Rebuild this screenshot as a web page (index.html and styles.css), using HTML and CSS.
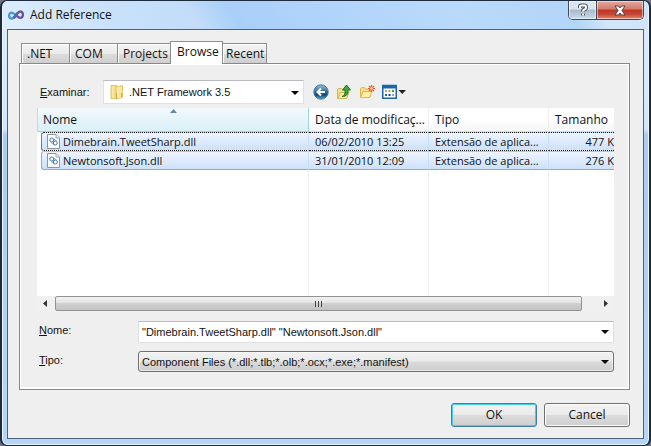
FILE: index.html
```html
<!DOCTYPE html>
<html lang="pt">
<head>
<meta charset="utf-8">
<title>Add Reference</title>
<link rel="stylesheet" href="styles.css">
</head>
<body>
<div class="window" role="dialog" aria-labelledby="title">
  <header class="titlebar">
    <svg class="app-icon" viewBox="0 0 16 10" fill="none" stroke-width="2.4" aria-hidden="true">
      <path d="M8 5C6 8 4.8 8.5 3.8 8.5a2.7 2.9 0 0 1 0-5.8C5.500 2.700 6.500 4 8 5.500" stroke="#4a9acb"/>
      <path d="M6 7.500C8.500 6 9.500 1.500 12.200 1.500a2.800 3.200 0 0 1 0 6.400C10.500 7.900 9.500 6.500 8 5" stroke="#6b4f9e"/>
      <path d="M5.500 8C7.500 7 8 5 9.500 3" stroke="#5068b4"/>
    </svg>
    <h1 id="title">Add Reference</h1>
    <div class="caption-buttons">
      <button class="caption help" type="button" aria-label="Help">
        <svg viewBox="0 0 12 14" width="12" height="14" fill="none" aria-hidden="true">
          <path d="M3 5V3.500Q3 2.500 4.500 2.500H7.500Q9 2.500 9 4V5Q9 6 7.500 6.500 6 7 6 8.500M6 10.500v2" stroke="#4b5666" stroke-width="4"/>
          <path d="M3 5V3.500Q3 2.500 4.500 2.500H7.500Q9 2.500 9 4V5Q9 6 7.500 6.500 6 7 6 8.500M6 10.500v2" stroke="#fff" stroke-width="2"/>
        </svg>
      </button>
      <button class="caption close" type="button" aria-label="Close">
        <svg viewBox="0 0 12 11" width="12" height="11" aria-hidden="true">
          <path d="M1 1h3.500L6 3l1.500-2H11L8 5.500 11 10H7.500L6 8l-1.500 2H1l3-4.500z" fill="#fff" stroke="#5c3b40"/>
        </svg>
      </button>
    </div>
  </header>

  <main class="client">
    <div class="tabs" role="tablist">
      <button class="tab" type="button" role="tab">.NET</button>
      <button class="tab" type="button" role="tab">COM</button>
      <button class="tab wide" type="button" role="tab">Projects</button>
      <button class="tab active" type="button" role="tab" aria-selected="true">Browse</button>
      <button class="tab last" type="button" role="tab">Recent</button>
    </div>

    <section class="panel">
      <div class="lookin">
        <label for="folder"><u>E</u>xaminar:</label>
        <div class="combo folder-combo">
          <svg class="folder" viewBox="0 0 14 16" width="14" height="16" aria-hidden="true">
            <path d="M1 1.500h6v13H1z" fill="#f3dc83" stroke="#dfc368"/>
            <path d="M6 3l6.500-1.500v12L6 15z" fill="#f8e69b" stroke="#e3c76c"/>
            <path d="M3 2v12M8 4v9" stroke="#fff5c6"/>
            <path d="M6.500 9v6M11.500 9v4" stroke="#d0ae50"/>
          </svg>
          <select id="folder"><option>.NET Framework 3.5</option></select>
        </div>
        <div class="tools">
          <button class="tool" type="button" aria-label="Back">
            <svg viewBox="0 0 16 16" width="16" height="16" aria-hidden="true">
              <defs><linearGradient id="orb" x2="0" y2="1"><stop stop-color="#9cc0da"/><stop offset=".45" stop-color="#2f70a3"/><stop offset=".7" stop-color="#124878"/><stop offset="1" stop-color="#42b7dc"/></linearGradient></defs>
              <circle cx="8" cy="8" r="7.200" fill="url(#orb)" stroke="#4d7898"/>
              <path d="M12 8H5M8 4.500L4.500 8 8 11.500" fill="none" stroke="#fff" stroke-width="2"/>
            </svg>
          </button>
          <button class="tool" type="button" aria-label="Up one level">
            <svg viewBox="0 0 16 16" width="16" height="16" aria-hidden="true">
              <path d="M1.500 14.500v-9l1-1h3l1 1h5v7l-2 2z" fill="#f6df7c" stroke="#d0b35a"/>
              <path d="M2 14.500l2.500-6h8.500l-2.500 6z" fill="#fff0a2" stroke="#d0b35a"/>
              <path d="M6 12.500c3-1 3.300-3.500 3-6.500H6.500l4-5 4 5H12c.5 4-1.500 6.500-6 6.500z" fill="#3caa36" stroke="#16741d"/>
            </svg>
          </button>
          <button class="tool" type="button" aria-label="New folder">
            <svg viewBox="0 0 16 16" width="16" height="16" aria-hidden="true">
              <path d="M1.500 13.500v-9l1-1h3l1 1.500H11v8z" fill="#f6df7c" stroke="#dcb85d"/>
              <path d="M1.500 13.500l2.500-6h9l-2.500 6z" fill="#fff0a2" stroke="#dcb85d"/>
              <path d="M12.500 1v7M9 4.500h7M10 2l5 5M15 2l-5 5" stroke="#ee5a32" stroke-width="1.200"/>
              <circle cx="12.500" cy="4.500" r="1.300" fill="#ffe18c"/>
            </svg>
          </button>
          <button class="tool view" type="button" aria-label="View">
            <svg viewBox="0 0 24 16" width="24" height="16" aria-hidden="true">
              <path d="M.75 1.500h13.500v12.700H.75z" fill="#fff" stroke="#1d63ad" stroke-width="1.500"/>
              <path d="M0 1h15v3.500H0z" fill="#1d63ad"/>
              <path d="M3 6h2v2H3zM10 10h2v2h-2z" fill="#8fa9c6"/>
              <path d="M6.500 6h2v2h-2z" fill="#c89c42"/><path d="M10 6h2v2h-2z" fill="#3b9b48"/>
              <path d="M3 10h2v2H3z" fill="#2466b0"/><path d="M6.500 10h2v2h-2z" fill="#203c98"/>
              <path d="M16.500 6H24l-3.750 4z" fill="#222"/>
            </svg>
          </button>
        </div>
      </div>

      <div class="list">
        <table>
          <colgroup><col class="c-name"><col class="c-mid"><col class="c-mid"><col></colgroup>
          <thead>
            <tr><th class="sorted" aria-sort="ascending">Nome</th><th>Data de modificaç...</th><th>Tipo</th><th>Tamanho</th></tr>
          </thead>
          <tbody>
            <tr class="selected focused">
              <td><span class="file"><svg viewBox="0 0 13 15" width="13" height="15" aria-hidden="true"><path d="M.5.500h8.500l3.500 3.500v10.500H.5z" fill="#fff" stroke="#8d9398"/><path d="M9 .5V4h3.500" fill="#eee" stroke="#a0a5aa"/><g fill="none" stroke="#3c76ab"><circle cx="4.800" cy="6" r="2"/><circle cx="8.300" cy="9" r="2"/></g><path d="M4 8.500l3 2.500M7 5l3 2.500" stroke="#7a9fc1"/></svg>Dimebrain.TweetSharp.dll</span></td>
              <td>06/02/2010 13:25</td><td>Extensão de aplica...</td><td class="size">477 K</td>
            </tr>
            <tr class="selected">
              <td><span class="file"><svg viewBox="0 0 13 15" width="13" height="15" aria-hidden="true"><path d="M.5.500h8.500l3.500 3.500v10.500H.5z" fill="#fff" stroke="#8d9398"/><path d="M9 .5V4h3.500" fill="#eee" stroke="#a0a5aa"/><g fill="none" stroke="#3c76ab"><circle cx="4.800" cy="6" r="2"/><circle cx="8.300" cy="9" r="2"/></g><path d="M4 8.500l3 2.500M7 5l3 2.500" stroke="#7a9fc1"/></svg>Newtonsoft.Json.dll</span></td>
              <td>31/01/2010 12:09</td><td>Extensão de aplica...</td><td class="size">276 K</td>
            </tr>
            <tr class="blank" aria-hidden="true"><td></td><td></td><td></td><td></td></tr>
          </tbody>
        </table>
        <div class="scrollbar" aria-hidden="true">
          <span class="arrow left"></span>
          <div class="track"><div class="thumb"><i></i><i></i><i></i></div></div>
          <span class="arrow right"></span>
        </div>
      </div>

      <div class="fields">
        <label for="name"><u>N</u>ome:</label>
        <div class="combo"><input id="name" type="text" value='"Dimebrain.TweetSharp.dll" "Newtonsoft.Json.dll"'></div>
        <label for="type"><u>T</u>ipo:</label>
        <div class="combo raised"><select id="type"><option>Component Files (*.dll;*.tlb;*.olb;*.ocx;*.exe;*.manifest)</option></select></div>
      </div>
    </section>

    <footer class="actions">
      <button class="button default" type="button">OK</button>
      <button class="button" type="button">Cancel</button>
    </footer>
  </main>
</div>
</body>
</html>
```
FILE: styles.css
```css
* { box-sizing: border-box; }

body {
  margin: 0;
  background: #6d7480;
  color: #111;
  font: 12px/16px "Open Sans", "Noto Sans", sans-serif;
}

button, input, select { font: inherit; color: inherit; margin: 0; }

.window {
  display: flex;
  flex-direction: column;
  min-height: 100vh;
  padding: 0 5px 6px;
  border: 2px solid #1e2b3c;
  border-top-width: 1px;
  border-bottom-width: 1px;
  border-radius: 7px;
  background: linear-gradient(#dcecfd 0, #d2e6fc 128px, #a9cdf3 134px, #b4d6f8 100%);
  box-shadow: inset 0 0 0 1px #eaf5ff;
}

.titlebar {
  display: flex;
  align-items: center;
  height: 28px;
  margin: 0 -4px;
  padding-left: 5px;
  border-radius: 5px 5px 0 0;
  background: linear-gradient(58deg, #dfeefd 0, #c9e1fb 17%, #c2dcf9 30%, #a9cff8 36%, #aed2fa 45%, #b9dafb 70%, #b3d5f7 87%, #d3e6f8 92%, #cfe4fa 100%);
}

.app-icon { width: 16px; height: 10px; }

h1 { flex: 1; margin: 0 0 0 6px; font: inherit; }

.caption-buttons {
  display: flex;
  align-self: flex-start;
  margin-right: 4px;
  border: 1px solid #3d4b5f;
  border-top: 0;
  border-radius: 0 0 5px 5px;
  overflow: hidden;
}

.caption {
  display: grid;
  place-items: center;
  height: 18px;
  padding: 0;
  border: 0;
  box-shadow: inset 0 0 0 1px #ffffff80;
}

.help { width: 27px; background: linear-gradient(#dce5ef 0 45%, #a9b9ca 50%, #c9dced); }
.close { width: 47px; border-left: 1px solid #3d4b5f; background: linear-gradient(#e5aaa0, #d57967 45%, #ba3525 50%, #c74835 75%, #e38b6f); }

.client {
  flex: 1;
  padding: 10px 13px 11px 11px;
  border: 1px solid #4d6178;
  background: #efefef;
}

.tabs { display: flex; align-items: flex-end; padding-left: 2px; height: 23px; }

.tab {
  width: 48px;
  height: 20px;
  padding: 0 5px;
  border: 1px solid #8b8e93;
  border-width: 1px 0 0 1px;
  background: linear-gradient(#f3f3f3, #ebebeb 50%, #dcdcdc 52%, #cfcfcf);
  box-shadow: inset 1px 1px #fff;
  text-align: left;
  white-space: nowrap;
}

.tab.wide { width: 53px; }
.tab.active { position: relative; width: 53px; height: 23px; margin-bottom: -1px; padding: 0 6px 3px; border-right-width: 1px; background: #fff; }
.tab.last { width: 44px; padding: 0 3px; border-left-width: 0; border-right-width: 1px; }

.panel {
  padding: 16px 15px 17px 17px;
  border: 1px solid #85888c;
  box-shadow: inset 1px 1px #fff, inset -1px -2px #fff;
}

label, .fields, .combo { font-family: "Liberation Sans", Arial, sans-serif; font-size: 11px; }

.lookin { display: flex; align-items: center; height: 24px; margin-bottom: 4px; padding-left: 3px; }
.lookin label { width: 63px; }

.combo { position: relative; display: flex; align-items: center; height: 22px; border: 1px solid #dfe0e2; border-top-color: #b9bbc0; background: #fff; }
.combo::after {
  content: "";
  position: absolute;
  right: 4px;
  top: 8px;
  width: 8px;
  height: 4px;
  background: #000;
  clip-path: polygon(0 0, 100% 0, 50% 100%);
  pointer-events: none;
}

.combo input, .combo select { flex: 1; min-width: 0; height: 20px; padding: 0 18px 0 3px; border: 0; outline: 0; background: none; appearance: none; }

.folder-combo { width: 201px; height: 24px; padding-left: 6px; }
.folder-combo::after { top: 10px; }
.folder-combo select { padding-left: 5px; }

.raised { height: 21px; border: 1px solid #707070; border-radius: 3px; background: linear-gradient(#f2f2f2, #ebebeb 48%, #dadada 52%, #cdcdcd); box-shadow: inset 0 0 0 1px #ffffff90; }

.tools { display: flex; gap: 7px; margin-left: 9px; }
.tool { display: flex; width: 16px; height: 16px; padding: 0; border: 0; background: none; }
.tool.view { width: 24px; }

.list { background: #fff; }

table { width: 100%; border-collapse: separate; border-spacing: 0; table-layout: fixed; }
.c-name { width: 272px; }
.c-mid { width: 120px; }

th, td { overflow: hidden; padding: 0 6px; white-space: nowrap; text-align: left; font-weight: 400; border-right: 1px solid #edf0f3; }
th:last-child, td:last-child { border-right: 0; }
td { font-size: 11px; }

th { height: 24px; border-bottom: 1px solid #d5d9df; background: linear-gradient(#fff 45%, #f4f5f7); }
th.sorted { position: relative; padding-left: 5px; border-color: #9fd4ea; border-left: 1px solid #b5dff0; background: linear-gradient(#f3fafd, #e5f4fa 50%, #d9eff7); }
th.sorted::before {
  content: "";
  position: absolute;
  left: 132px;
  top: 1px;
  width: 7px;
  height: 4px;
  background: #5b8aab;
  clip-path: polygon(50% 0, 100% 100%, 0 100%);
}

.selected td { height: 19px; border-top: 1px solid #a9c9ee; border-bottom: 1px solid #84acdd; border-right-color: #cddff5; background: linear-gradient(#edf4fe, #cde1fb); }
.selected td:first-child { padding: 0; background: none; border: 0; }
.selected .size { padding: 0; text-align: right; }

.file { display: flex; align-items: center; gap: 3px; height: 19px; margin-left: 4px; padding-left: 5px; border: 1px solid #84acdd; border-top-color: #a9c9ee; border-right-color: #cddff5; border-radius: 3px 0 0 3px; background: linear-gradient(#edf4fe, #cde1fb); }
.selected.focused td, .focused .file { border-top: 1px dotted #111; border-bottom: 1px dotted #111; }
.selected.focused td:first-child { border: 0; }
.focused .file { border-left: 1px dotted #111; }

.blank td { height: 126px; }

.scrollbar { display: flex; align-items: center; height: 15px; background: #f0f0f0; }
.arrow { width: 4px; height: 7px; background: #333; }
.left { margin: 0 8px 0 6px; clip-path: polygon(100% 0, 100% 100%, 0 50%); }
.right { margin: 0 6px; clip-path: polygon(0 0, 100% 50%, 0 100%); }
.track { flex: 1; height: 15px; padding-right: 16px; }
.thumb { display: flex; align-items: center; justify-content: center; gap: 2px; height: 15px; border: 1px solid #929292; border-radius: 2px; background: linear-gradient(#f2f2f2, #e4e4e4 45%, #cfcfcf 50%, #c3c3c3); }
.thumb i { width: 1px; height: 6px; background: #444; }

.fields { display: grid; grid-template-columns: 101px 1fr; row-gap: 8px; margin-top: 10px; }
.fields label { padding: 1px 0 0 2px; }

.actions { display: flex; justify-content: flex-end; gap: 7px; margin-top: 13px; }
.button { width: 86px; height: 24px; padding: 0; border: 1px solid #707070; border-radius: 3px; background: linear-gradient(#f3f3f3, #ebebeb 48%, #dcdcdc 52%, #cecece); box-shadow: inset 0 0 0 1px #fcfcfc; }
.default { border-color: #3c7fb1; box-shadow: inset 0 0 0 1px #46cdf2; }
```
